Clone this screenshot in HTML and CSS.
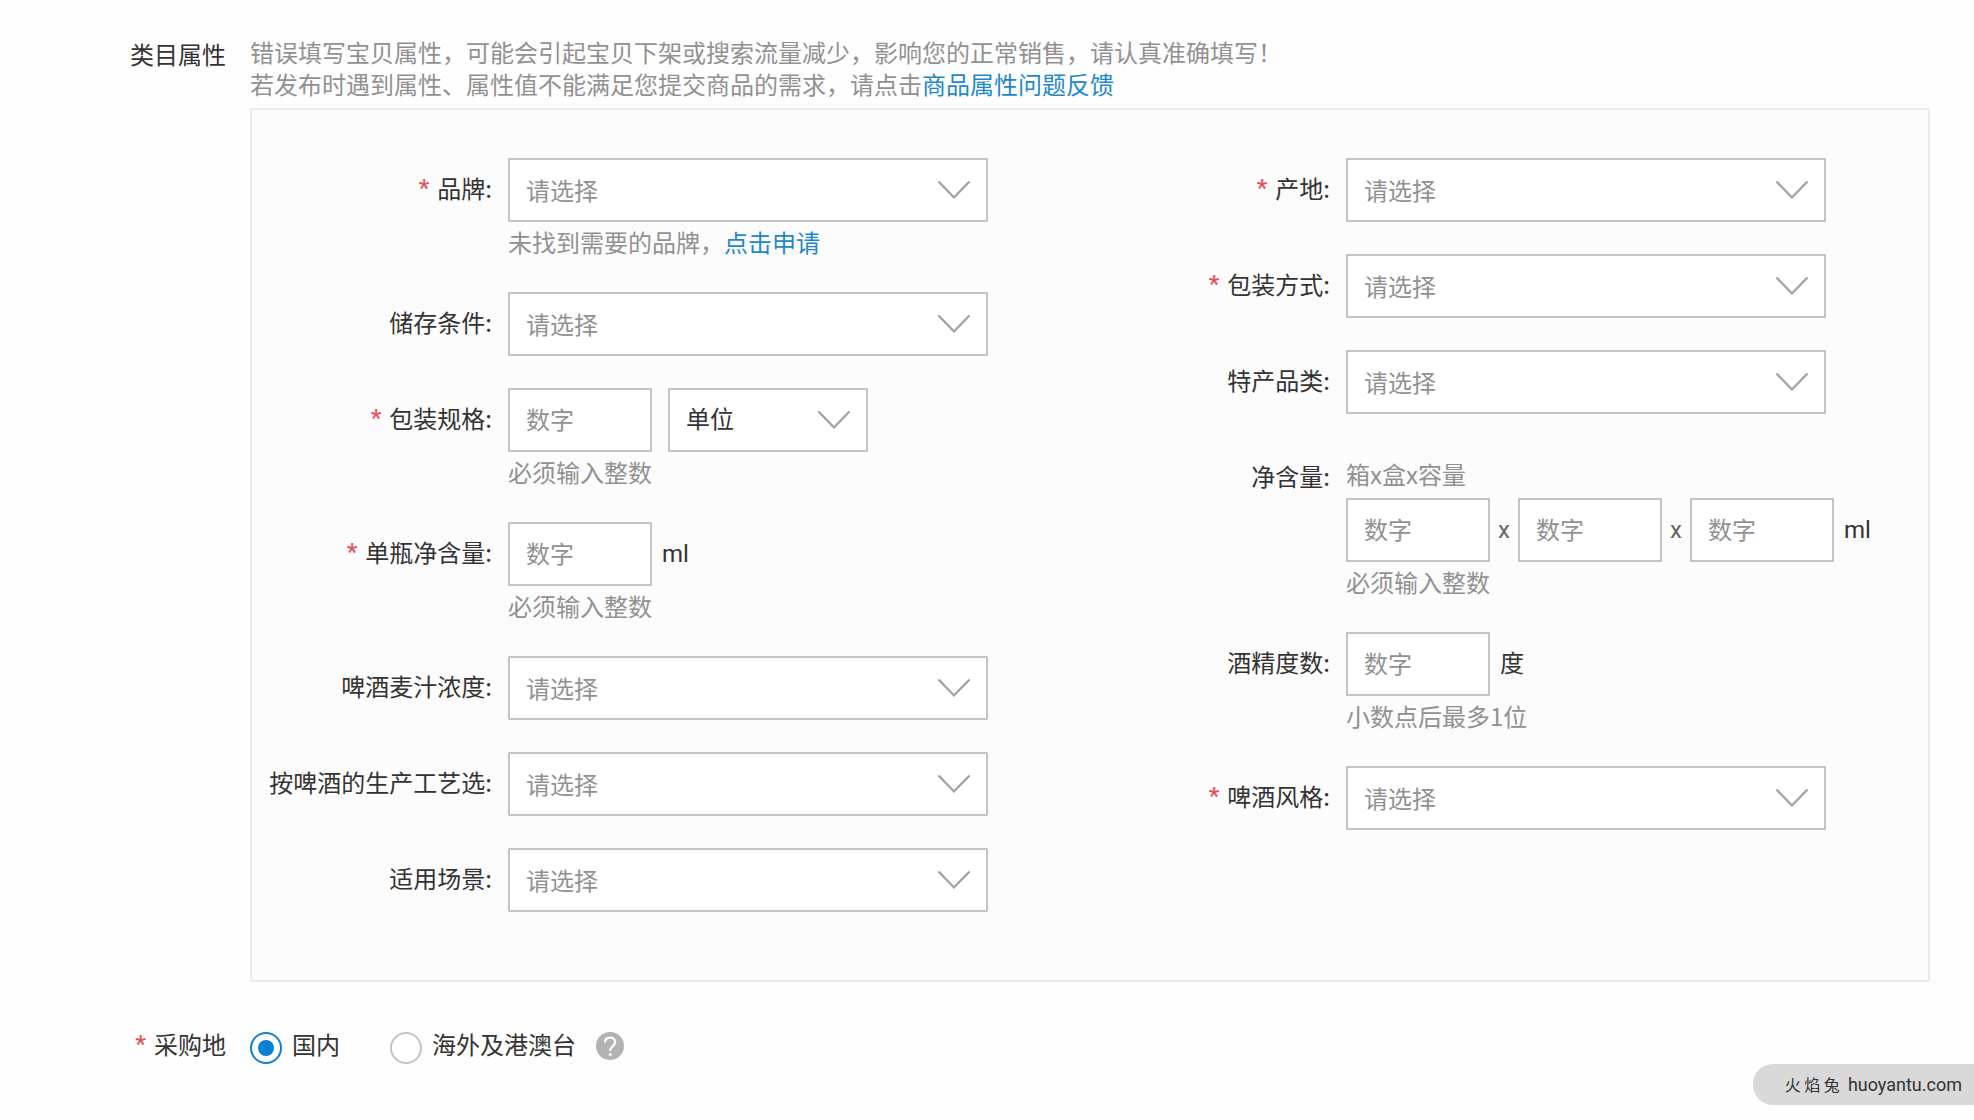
FILE: index.html
```html
<!DOCTYPE html>
<html lang="zh-CN">
<head>
<meta charset="utf-8">
<meta name="viewport" content="width=device-width, initial-scale=1">
<title>类目属性</title>
<link rel="stylesheet" href="styles.css">
</head>
<body>
<svg class="sprite" aria-hidden="true">
  <symbol id="chevron" viewBox="0 0 34 20">
    <path d="M1.5 1.5 L17 17.5 L32.5 1.5" fill="none" stroke="currentColor" stroke-width="2.2"/>
  </symbol>
</svg>
<form class="page">
  <section class="section">
    <h2 class="section-label section-label-top">类目属性</h2>
    <div class="section-body">
      <p class="notice">错误填写宝贝属性，可能会引起宝贝下架或搜索流量减少，影响您的正常销售，请认真准确填写！<br>若发布时遇到属性、属性值不能满足您提交商品的需求，请点击<a href="#feedback">商品属性问题反馈</a></p>
      <div class="panel">
        <div class="column">
          <div class="field">
            <label class="label" for="brand"><span class="star">*</span>品牌:</label>
            <div class="control">
              <div class="select wide"><select id="brand"><option>请选择</option></select><svg class="arrow"><use href="#chevron"/></svg></div>
              <p class="hint">未找到需要的品牌，<a href="#apply">点击申请</a></p>
            </div>
          </div>
          <div class="field">
            <label class="label" for="storage">储存条件:</label>
            <div class="control">
              <div class="select wide"><select id="storage"><option>请选择</option></select><svg class="arrow"><use href="#chevron"/></svg></div>
            </div>
          </div>
          <div class="field">
            <label class="label" for="spec"><span class="star">*</span>包装规格:</label>
            <div class="control">
              <div class="row row-spaced">
                <input class="number" id="spec" type="text" placeholder="数字">
                <div class="select unit-select"><select aria-label="单位"><option>单位</option></select><svg class="arrow"><use href="#chevron"/></svg></div>
              </div>
              <p class="hint">必须输入整数</p>
            </div>
          </div>
          <div class="field">
            <label class="label" for="bottle"><span class="star">*</span>单瓶净含量:</label>
            <div class="control">
              <div class="row">
                <input class="number" id="bottle" type="text" placeholder="数字">
                <span class="unit">ml</span>
              </div>
              <p class="hint">必须输入整数</p>
            </div>
          </div>
          <div class="field">
            <label class="label" for="wort">啤酒麦汁浓度:</label>
            <div class="control">
              <div class="select wide"><select id="wort"><option>请选择</option></select><svg class="arrow"><use href="#chevron"/></svg></div>
            </div>
          </div>
          <div class="field">
            <label class="label" for="craft">按啤酒的生产工艺选:</label>
            <div class="control">
              <div class="select wide"><select id="craft"><option>请选择</option></select><svg class="arrow"><use href="#chevron"/></svg></div>
            </div>
          </div>
          <div class="field">
            <label class="label" for="scene">适用场景:</label>
            <div class="control">
              <div class="select wide"><select id="scene"><option>请选择</option></select><svg class="arrow"><use href="#chevron"/></svg></div>
            </div>
          </div>
        </div>
        <div class="column">
          <div class="field">
            <label class="label" for="origin"><span class="star">*</span>产地:</label>
            <div class="control">
              <div class="select wide"><select id="origin"><option>请选择</option></select><svg class="arrow"><use href="#chevron"/></svg></div>
            </div>
          </div>
          <div class="field">
            <label class="label" for="packing"><span class="star">*</span>包装方式:</label>
            <div class="control">
              <div class="select wide"><select id="packing"><option>请选择</option></select><svg class="arrow"><use href="#chevron"/></svg></div>
            </div>
          </div>
          <div class="field">
            <label class="label" for="specialty">特产品类:</label>
            <div class="control">
              <div class="select wide"><select id="specialty"><option>请选择</option></select><svg class="arrow"><use href="#chevron"/></svg></div>
            </div>
          </div>
          <div class="field">
            <label class="label" for="boxes">净含量:</label>
            <div class="control">
              <p class="caption">箱x盒x容量</p>
              <div class="row">
                <input class="number" id="boxes" type="text" placeholder="数字">
                <span class="times">x</span>
                <input class="number" type="text" placeholder="数字" aria-label="盒">
                <span class="times">x</span>
                <input class="number" type="text" placeholder="数字" aria-label="容量">
                <span class="unit">ml</span>
              </div>
              <p class="hint">必须输入整数</p>
            </div>
          </div>
          <div class="field">
            <label class="label" for="alcohol">酒精度数:</label>
            <div class="control">
              <div class="row">
                <input class="number" id="alcohol" type="text" placeholder="数字">
                <span class="unit">度</span>
              </div>
              <p class="hint">小数点后最多1位</p>
            </div>
          </div>
          <div class="field">
            <label class="label" for="style"><span class="star">*</span>啤酒风格:</label>
            <div class="control">
              <div class="select wide"><select id="style"><option>请选择</option></select><svg class="arrow"><use href="#chevron"/></svg></div>
            </div>
          </div>
        </div>
      </div>
    </div>
  </section>
  <section class="section section-source">
    <h2 class="section-label" id="source-label"><span class="star">*</span>采购地</h2>
    <div class="radios" role="radiogroup" aria-labelledby="source-label">
      <label class="radio"><input type="radio" name="source" checked>国内</label>
      <label class="radio"><input type="radio" name="source">海外及港澳台</label>
      <button class="help" type="button" aria-label="帮助">
        <svg viewBox="0 0 28 28" width="28" height="28">
          <circle cx="14" cy="14" r="14" fill="#b3b3b3"/>
          <path d="M9 10.6 C9 7.4 11 5.6 14.1 5.6 C17.1 5.6 19.1 7.4 19.1 9.9 C19.1 12.1 17.9 13.2 16.4 14.6 C14.9 15.9 14.1 16.7 14.1 18.9" fill="none" stroke="#fff" stroke-width="2.2"/>
          <circle cx="14.1" cy="22.4" r="1.5" fill="#fff"/>
        </svg>
      </button>
    </div>
  </section>
</form>
<aside class="watermark"><span class="watermark-name">火 焰 兔</span><span class="watermark-site">huoyantu.com</span></aside>
</body>
</html>
```
FILE: styles.css
```css
* {
  box-sizing: border-box;
}

body {
  margin: 0;
  background: #fefefe;
  color: #333;
  font: 24px/32px "Noto Sans CJK SC", sans-serif;
}

h2,
p {
  margin: 0;
  font-size: 24px;
  font-weight: 400;
}

a {
  color: #1e88cb;
  text-decoration: none;
}

.sprite {
  display: none;
}

.page {
  padding: 36px 44px 48px 0;
}

.section {
  display: grid;
  grid-template-columns: 226px minmax(0, 1fr);
  column-gap: 24px;
}

.section-label {
  display: flex;
  justify-content: flex-end;
  line-height: 24px;
}

.section-label-top {
  line-height: 36px;
}

.notice {
  color: #919191;
}

.panel {
  display: grid;
  grid-template-columns: 1fr 1fr;
  margin-top: 8px;
  padding: 48px 0 36px;
  border: 2px solid #ebebeb;
  border-radius: 2px;
  background: #fcfcfc;
}

.field {
  display: grid;
  grid-template-columns: 256px minmax(0, 1fr);
  margin-bottom: 32px;
}

.label {
  display: flex;
  justify-content: flex-end;
  padding-right: 16px;
  line-height: 60px;
}

.star {
  margin-right: 8px;
  color: #e5505f;
  font-family: Roboto, sans-serif;
  font-weight: 500;
}

.row {
  display: flex;
  align-items: center;
}

.row-spaced {
  gap: 16px;
}

.select {
  display: grid;
  align-items: center;
}

.select > * {
  grid-area: 1 / 1;
}

.wide {
  width: 100%;
  max-width: 480px;
  color: #919191;
}

.unit-select {
  width: 200px;
}

select,
.number {
  height: 64px;
  margin: 0;
  padding: 0 16px;
  border: 2px solid #c4c4c4;
  border-radius: 0;
  background: #fff;
  color: inherit;
  font: inherit;
}

select {
  width: 100%;
  appearance: none;
}

.number,
.unit-select select {
  padding-bottom: 4px;
}

.number {
  width: 144px;
}

.number::placeholder {
  color: #919191;
  opacity: 1;
}

.arrow {
  justify-self: end;
  width: 34px;
  height: 20px;
  margin-right: 17px;
  color: #a0a0a0;
  pointer-events: none;
}

.hint,
.caption {
  color: #919191;
}

.hint {
  padding: 4px 0 2px;
}

.caption {
  padding: 12px 0 8px;
}

.unit,
.times {
  font-family: Roboto, "Noto Sans CJK SC", sans-serif;
}

.unit {
  margin-left: 10px;
}

.times {
  width: 28px;
  color: #666;
  text-align: center;
}

.section-source {
  margin-top: 50px;
}

.radios {
  display: flex;
  align-items: flex-start;
  line-height: 24px;
}

.radio {
  display: flex;
  align-items: flex-start;
  gap: 10px;
}

.radio + .radio {
  margin-left: 50px;
}

.radio input {
  display: grid;
  place-items: center;
  width: 32px;
  height: 32px;
  margin: 0;
  border: 2px solid #c4c4c4;
  border-radius: 50%;
  background: #fff;
  appearance: none;
}

.radio input:checked {
  border-color: #0f80cb;
}

.radio input:checked::before {
  content: "";
  width: 16px;
  height: 16px;
  border-radius: 50%;
  background: #0a80d2;
}

.help {
  display: block;
  margin: 0 0 0 20px;
  padding: 0;
  border: 0;
  background: none;
}

.help svg {
  display: block;
}

.watermark {
  position: fixed;
  right: 0;
  bottom: 15px;
  display: flex;
  align-items: center;
  gap: 8px;
  padding: 0 12px 0 32px;
  border-radius: 20px 0 0 20px;
  background: #d9d9d9;
  line-height: 41px;
}

.watermark-name {
  font-size: 16px;
}

.watermark-site {
  font-family: Roboto, sans-serif;
  font-size: 18px;
}
```
